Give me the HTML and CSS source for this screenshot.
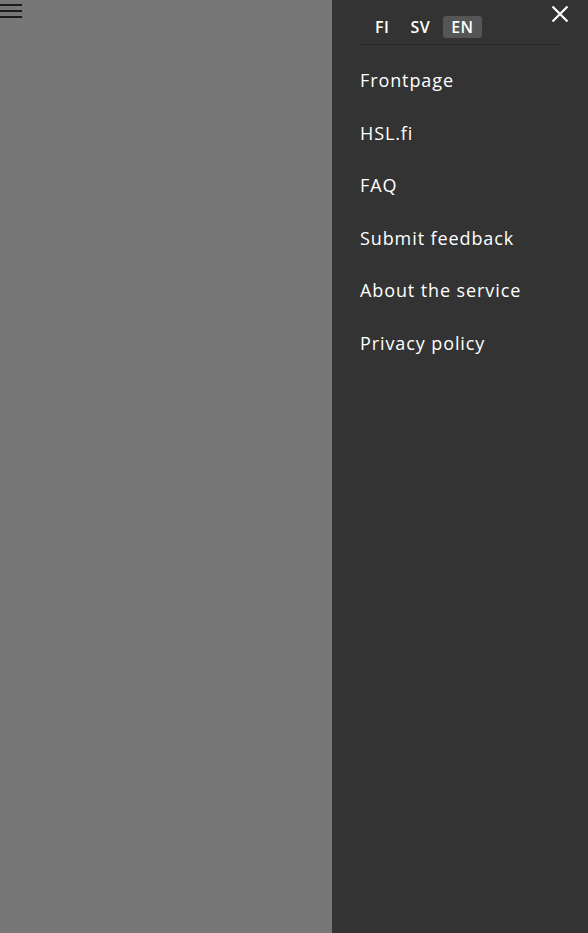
FILE: index.html
```html
<!DOCTYPE html>
<html>
<head>
<meta charset="utf-8">
<link rel="stylesheet" href="styles.css">
</head>
<body>
<div class="page">
  <div class="main">
    <button class="hamburger" aria-label="Menu">
      <span></span><span></span><span></span>
    </button>
  </div>
  <aside class="drawer">
    <button class="close" aria-label="Close">
      <svg width="18" height="18" viewBox="0 0 18 18"><path d="M1.5 1.5 L16.5 16.5 M16.5 1.5 L1.5 16.5" stroke="#fff" stroke-width="2.2" stroke-linecap="butt"/></svg>
    </button>
    <div class="langs">
      <span class="lang">FI</span>
      <span class="lang">SV</span>
      <span class="lang active">EN</span>
    </div>
    <nav class="menu">
      <a>Frontpage</a>
      <a>HSL.fi</a>
      <a>FAQ</a>
      <a>Submit feedback</a>
      <a>About the service</a>
      <a>Privacy policy</a>
    </nav>
  </aside>
</div>
</body>
</html>
```
FILE: styles.css
```css
* { box-sizing: border-box; }
html, body { margin: 0; padding: 0; height: 100%; }
body { font-family: "Open Sans", "DejaVu Sans", sans-serif; }
.page { display: flex; height: 933px; width: 588px; overflow: hidden; }
.main { flex: 0 0 332px; background: #777777; }
.hamburger { display: flex; flex-direction: column; gap: 4px; padding: 4px 0 0 0; margin: 0; border: 0; background: none; width: 22px; }
.hamburger span { display: block; height: 2px; width: 22px; background: #1c1c1c; }
.drawer { flex: 1; background: #333333; position: relative; padding: 16px 28px 0 28px; color: #fff; }
.close { position: absolute; top: 5px; right: 19px; border: 0; background: none; padding: 0; width: 18px; height: 18px; }
.close svg { display: block; }
.langs { display: flex; align-items: center; gap: 5px; padding: 0 0 6px 7px; border-bottom: 1px solid #262626; height: 29px; }
.lang { font-size: 16px; font-weight: 600; line-height: 22px; padding: 0 8px; border-radius: 3px; color: #fff; letter-spacing: 0.5px; }
.lang.active { background: #555555; }
.menu { display: flex; flex-direction: column; padding-top: 24px; }
.menu a { font-size: 18px; line-height: 22px; height: 52.6px; color: #fff; letter-spacing: 0.9px; }
```
